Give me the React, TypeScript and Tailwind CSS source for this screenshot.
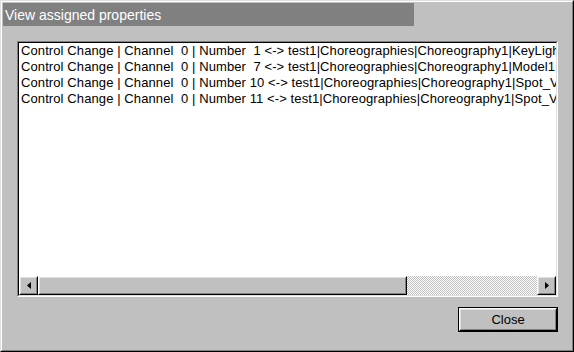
const ROWS = [
  "Control Change | Channel  0 | Number  1 <-> test1|Choreographies|Choreography1|KeyLight1|Intensity",
  "Control Change | Channel  0 | Number  7 <-> test1|Choreographies|Choreography1|Model1|Transparency",
  "Control Change | Channel  0 | Number 10 <-> test1|Choreographies|Choreography1|Spot_Var1|Value",
  "Control Change | Channel  0 | Number 11 <-> test1|Choreographies|Choreography1|Spot_Var2|Value",
];

function ArrowButton({ dir }: { dir: "left" | "right" }) {
  return (
    <div className="h-full w-[19px] shrink-0 border border-t-white border-l-white border-r-black border-b-black bg-[#c0c0c0]">
      <div className="flex h-full w-full items-center justify-center border border-t-[#dfdfdf] border-l-[#dfdfdf] border-r-[#808080] border-b-[#808080]">
        <svg width="4" height="7" viewBox="0 0 4 7">
          {dir === "left" ? <path d="M4 0 L0 3.5 L4 7 Z" fill="#000" /> : <path d="M0 0 L4 3.5 L0 7 Z" fill="#000" />}
        </svg>
      </div>
    </div>
  );
}

export default function App() {
  return (
    <div
      className="h-[352px] w-[574px] border border-t-[#dfdfdf] border-l-[#dfdfdf] border-r-black border-b-black bg-[#c0c0c0] text-[13px] leading-4 text-black"
      style={{ fontFamily: '"Liberation Sans", Arial, sans-serif' }}
    >
      <div className="flex h-full flex-col border border-t-white border-l-white border-r-[#808080] border-b-[#808080] p-[1px]">
        <div className="flex h-[23px] w-[411px] items-center bg-[#808080] pl-[2px] text-[14px] text-white">
          View assigned properties
        </div>

        <div className="flex flex-col pl-[14px] pr-[13px]">
          <div className="mt-[15px] h-[256px] border border-t-[#808080] border-l-[#808080] border-r-white border-b-white">
            <div className="flex h-full flex-col border border-t-black border-l-black border-r-[#dfdfdf] border-b-[#dfdfdf] bg-white">
              <div className="flex-1 overflow-hidden pl-[2px] tracking-[0.1px]">
                {ROWS.map((row) => (
                  <div key={row} className="whitespace-pre">
                    {row}
                  </div>
                ))}
              </div>
              <div className="flex h-[19px] shrink-0">
                <ArrowButton dir="left" />
                <div className="h-full w-[369px] shrink-0 border border-t-white border-l-white border-r-black border-b-black bg-[#c0c0c0]">
                  <div className="h-full w-full border border-t-[#dfdfdf] border-l-[#dfdfdf] border-r-[#808080] border-b-[#808080]" />
                </div>
                <div className="flex-1 bg-[repeating-conic-gradient(#c0c0c0_0_25%,#ffffff_0_50%)] bg-[length:2px_2px]" />
                <ArrowButton dir="right" />
              </div>
            </div>
          </div>

          <div className="mt-[10px] flex justify-end">
            <button type="button" className="h-[25px] w-[100px] border border-black bg-[#c0c0c0]">
              <div className="flex h-full w-full items-center justify-center border border-t-white border-l-white border-r-black border-b-black">
                <div className="flex h-full w-full items-center justify-center border border-t-[#dfdfdf] border-l-[#dfdfdf] border-r-[#808080] border-b-[#808080]">
                  Close
                </div>
              </div>
            </button>
          </div>
        </div>
      </div>
    </div>
  );
}
